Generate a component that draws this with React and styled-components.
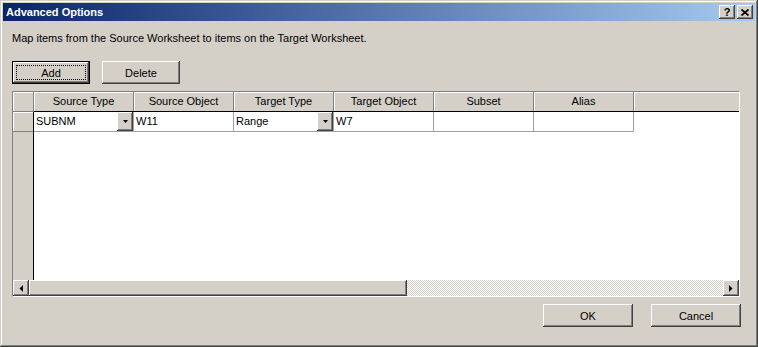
import React from 'react';
import styled, { createGlobalStyle } from 'styled-components';

const GlobalStyle = createGlobalStyle`
  html, body {
    margin: 0;
    padding: 0;
    background: #d4d0c8;
  }
  body {
    font-family: 'Liberation Sans', Arial, sans-serif;
    font-size: 11px;
    color: #000;
  }
`;

const raised = `
  background: #d4d0c8;
  box-shadow: inset -1px -1px #404040, inset 1px 1px #ffffff, inset -2px -2px #808080, inset 2px 2px #d4d0c8;
`;

const columns = ['Source Type', 'Source Object', 'Target Type', 'Target Object', 'Subset', 'Alias'];

const rows = [
  [
    { text: 'SUBNM', dropdown: true },
    { text: 'W11' },
    { text: 'Range', dropdown: true },
    { text: 'W7' },
    { text: '' },
    { text: '' }
  ]
];

function DownArrow() {
  return (
    <svg width="5" height="3" viewBox="0 0 5 3">
      <path d="M0 0h5L2.5 3z" fill="#000" />
    </svg>
  );
}

function SideArrow({ dir }) {
  return (
    <svg width="4" height="7" viewBox="0 0 4 7">
      {dir === 'left'
        ? <path d="M4 0v7L0.5 3.5z" fill="#000" />
        : <path d="M0 0v7L3.5 3.5z" fill="#000" />}
    </svg>
  );
}

function App() {
  return (
    <>
      <GlobalStyle />
      <Window>
        <TitleBar>
          <TitleText>Advanced Options</TitleText>
          <TitleButton>?</TitleButton>
          <TitleButton>
            <svg width="8" height="7" viewBox="0 0 8 7">
              <path d="M0.5 0.5L7.5 6.5M7.5 0.5L0.5 6.5" stroke="#000" strokeWidth="1.7" />
            </svg>
          </TitleButton>
        </TitleBar>

        <Body>
          <Description>Map items from the Source Worksheet to items on the Target Worksheet.</Description>

          <Toolbar>
            <Button $default $width={78}>Add</Button>
            <Button $width={78}>Delete</Button>
          </Toolbar>

          <Grid>
            <Corner />
            <HeaderRow>
              {columns.map((c) => (
                <HeaderCell key={c}>{c}</HeaderCell>
              ))}
              <HeaderFiller />
            </HeaderRow>

            <RowHeaders>
              {rows.map((_, i) => (
                <RowHeaderCell key={i} />
              ))}
            </RowHeaders>

            <DataArea>
              {rows.map((row, i) => (
                <DataRow key={i}>
                  {row.map((cell, j) => (
                    <DataCell key={j}>
                      <span>{cell.text}</span>
                      {cell.dropdown && (
                        <DropButton>
                          <DownArrow />
                        </DropButton>
                      )}
                    </DataCell>
                  ))}
                </DataRow>
              ))}
            </DataArea>

            <ScrollBar>
              <ScrollButton><SideArrow dir="left" /></ScrollButton>
              <Thumb />
              <Track />
              <ScrollButton><SideArrow dir="right" /></ScrollButton>
            </ScrollBar>
          </Grid>

          <Footer>
            <Button $width={90}>OK</Button>
            <Button $width={90}>Cancel</Button>
          </Footer>
        </Body>
      </Window>
    </>
  );
}

export default App;

const Window = styled.div`
  width: 758px;
  height: 347px;
  box-sizing: border-box;
  padding: 3px;
  display: flex;
  flex-direction: column;
  background: #d4d0c8;
  box-shadow: inset -1px -1px #404040, inset 1px 1px #d4d0c8, inset -2px -2px #808080, inset 2px 2px #ffffff;
`;

const TitleBar = styled.div`
  height: 18px;
  display: flex;
  align-items: center;
  padding: 0 2px 0 3px;
  background: linear-gradient(to right, #0a246a, #a6caf0);
  color: #fff;
  font-weight: bold;
  font-size: 11px;
`;

const TitleText = styled.span`
  flex: 1;
  white-space: nowrap;
`;

const TitleButton = styled.div`
  ${raised}
  width: 16px;
  height: 14px;
  margin-left: 2px;
  display: flex;
  align-items: center;
  justify-content: center;
  color: #000;
  font-weight: bold;
  font-size: 11px;
  line-height: 14px;
`;

const Body = styled.div`
  flex: 1;
  padding: 11px 15px 0 9px;
  display: flex;
  flex-direction: column;
`;

const Description = styled.div`
  height: 13px;
  line-height: 13px;
  white-space: nowrap;
`;

const Toolbar = styled.div`
  margin-top: 16px;
  display: flex;
  gap: 12px;
`;

const Button = styled.div`
  ${raised}
  width: ${(p) => p.$width}px;
  height: 23px;
  box-sizing: border-box;
  display: flex;
  align-items: center;
  justify-content: center;
  ${(p) => p.$default && `
    border: 1px solid #000;
    outline: 1px dotted #000;
    outline-offset: -5px;
  `}
`;

const Grid = styled.div`
  margin-top: 7px;
  width: 728px;
  height: 206px;
  box-sizing: border-box;
  border: 1px solid;
  border-color: #808080 #ffffff #ffffff #808080;
  display: grid;
  grid-template-columns: 21px 1fr;
  grid-template-rows: 20px 1fr 16px;
`;

const Corner = styled.div`
  background: #d4d0c8;
  box-shadow: inset 1px 1px #fff;
  border-right: 1px solid #808080;
  border-bottom: 1px solid #808080;
`;

const HeaderRow = styled.div`
  display: flex;
  background: #d4d0c8;
  border-bottom: 1px solid #000;
`;

const HeaderCell = styled.div`
  width: 100px;
  flex: none;
  box-sizing: border-box;
  border-right: 1px solid #808080;
  box-shadow: inset 1px 1px #fff;
  text-align: center;
  line-height: 19px;
  white-space: nowrap;
`;

const HeaderFiller = styled.div`
  flex: 1;
  box-shadow: inset 1px 1px #fff;
`;

const RowHeaders = styled.div`
  background: #d4d0c8;
  border-right: 1px solid #000;
`;

const RowHeaderCell = styled.div`
  height: 20px;
  box-sizing: border-box;
  border-bottom: 1px solid #808080;
  box-shadow: inset 1px 1px #fff;
`;

const DataArea = styled.div`
  background: #fff;
`;

const DataRow = styled.div`
  display: flex;
  height: 20px;
`;

const DataCell = styled.div`
  width: 100px;
  flex: none;
  box-sizing: border-box;
  border-right: 1px solid #a0a0a0;
  border-bottom: 1px solid #a0a0a0;
  padding-left: 2px;
  display: flex;
  justify-content: space-between;
  align-items: stretch;
  line-height: 19px;
  white-space: nowrap;
`;

const DropButton = styled.div`
  ${raised}
  width: 16px;
  display: flex;
  align-items: center;
  justify-content: center;
`;

const ScrollBar = styled.div`
  grid-column: 1 / -1;
  display: flex;
  height: 16px;
`;

const ScrollButton = styled.div`
  ${raised}
  width: 16px;
  height: 16px;
  flex: none;
  display: flex;
  align-items: center;
  justify-content: center;
`;

const Thumb = styled.div`
  ${raised}
  width: 378px;
  flex: none;
`;

const Track = styled.div`
  flex: 1;
  background: repeating-conic-gradient(#d4d0c8 0 25%, #ffffff 0 50%) 0 0 / 2px 2px;
`;

const Footer = styled.div`
  margin-top: 7px;
  margin-right: -1px;
  display: flex;
  justify-content: flex-end;
  gap: 18px;
`;
